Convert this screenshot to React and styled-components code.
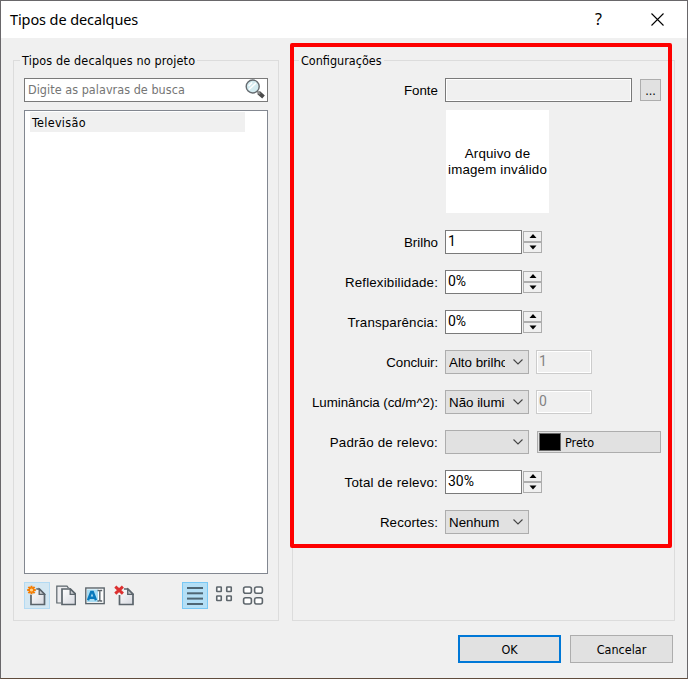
import { useState } from "react";
import styled, { createGlobalStyle, css } from "styled-components";

const GlobalStyle = createGlobalStyle`
  * {
    box-sizing: border-box;
  }
  body {
    margin: 0;
    background: #6b6b6b;
    overflow: hidden;
  }
  button, input {
    font: inherit;
    padding: 0;
    border-radius: 0;
    outline: none;
  }
`;

const tahoma = css`
  font-family: "DejaVu Sans Condensed", "DejaVu Sans", sans-serif;
  font-stretch: condensed;
  font-size: 12.5px;
`;

const Dialog = styled.div`
  width: 688px;
  height: 679px;
  display: flex;
  flex-direction: column;
  background: #f0f0f0;
  border: 1px solid #69676a;
  border-bottom-color: #604c3c;
  color: #000;
  font-family: "Liberation Sans", Arial, sans-serif;
  font-size: 13.33px;
`;

const TitleBar = styled.div`
  height: 37px;
  flex: none;
  display: flex;
  align-items: center;
  padding-left: 9px;
  background: #fff;
`;

const Title = styled.div`
  flex: 1;
  padding-bottom: 1px;
  font-family: "Noto Sans", "Open Sans", sans-serif;
  font-size: 14.5px;
  letter-spacing: -0.1px;
`;

const TitleButton = styled.button`
  width: ${(p) => p.$width}px;
  height: 37px;
  display: flex;
  align-items: center;
  justify-content: center;
  padding-bottom: 1px;
  border: none;
  background: none;
  color: #000;
  font-family: "Noto Sans", sans-serif;
  font-size: 16px;
`;

const Body = styled.div`
  display: flex;
  gap: 13px;
  padding: 14px 12px 0;
`;

const Group = styled.fieldset`
  position: relative;
  width: ${(p) => p.$width}px;
  height: 569px;
  margin: 0;
  padding: ${(p) => p.$padding};
  border: 1px solid #dcdcdc;
  min-width: 0;
`;

const Legend = styled.legend`
  ${tahoma}
  height: 17px;
  line-height: 18px;
  padding: 0 2px;
  margin-left: ${(p) => p.$offset}px;
  white-space: nowrap;
  letter-spacing: ${(p) => p.$spacing || "0"};
`;

const SearchBox = styled.div`
  height: 24px;
  display: flex;
  align-items: center;
  padding: 0 2px 2px 3px;
  background: #fff;
  border: 1px solid #7a7a7a;
`;

const SearchInput = styled.input`
  ${tahoma}
  flex: 1;
  min-width: 0;
  border: none;
  background: none;
  letter-spacing: 0.04px;
  &::placeholder {
    color: #757575;
    opacity: 1;
  }
`;

const List = styled.div`
  height: 464px;
  margin-top: 8px;
  padding: 1px 22px 0 5px;
  background: #fff;
  border: 1px solid #828790;
`;

const ListItem = styled.div`
  ${tahoma}
  height: 20px;
  line-height: 21px;
  padding-left: 2px;
  background: #f0f0f0;
  letter-spacing: 0.3px;
`;

const Toolbar = styled.div`
  display: flex;
  align-items: center;
  gap: 3px;
  margin: 8px 2px 0 0;
`;

const Spacer = styled.div`
  flex: 1;
`;

const ToolButton = styled.button`
  width: 26px;
  height: 27px;
  display: flex;
  align-items: center;
  justify-content: center;
  border: 1px solid ${(p) => p.$border || "transparent"};
  background: ${(p) => p.$fill || "none"};
`;

const Highlight = styled.div`
  position: absolute;
  z-index: 1;
  left: -3px;
  top: -26px;
  width: 382px;
  height: 505px;
  border: 4px solid #fe0000;
  border-radius: 2px;
  pointer-events: none;
`;

const Form = styled.div`
  display: flex;
  flex-direction: column;
  gap: 16px;
`;

const Row = styled.div`
  display: flex;
  align-items: center;
  height: 24px;
`;

const Label = styled.label`
  width: 145px;
  margin-right: 7px;
  text-align: right;
  white-space: nowrap;
  padding-top: 1px;
  letter-spacing: ${(p) => p.$spacing || 0}px;
`;

const SourceField = styled.div`
  width: 187px;
  height: 24px;
  margin-right: 8px;
  border: 1px solid #7a7a7a;
  box-shadow: inset 0 0 0 1px #fff;
`;

const BrowseButton = styled.button`
  ${tahoma}
  width: 21px;
  height: 22px;
  border: 1px solid #adadad;
  background: #e1e1e1;
  color: #000;
`;

const Preview = styled.div`
  width: 103px;
  height: 103px;
  margin: -8px 0 1px 153px;
  display: flex;
  align-items: center;
  justify-content: center;
  background: #fff;
  line-height: 16px;
  text-align: center;
  white-space: pre-line;
  letter-spacing: 0.18px;
`;

const NumberInput = styled.input`
  width: ${(p) => (p.disabled ? 56 : 77)}px;
  height: 24px;
  padding: 0 0 2px 2px;
  font-family: Roboto, Arial, sans-serif;
  font-size: 14px;
  color: ${(p) => (p.disabled ? "#838383" : "#000")};
  background: ${(p) => (p.disabled ? "#f0f0f0" : "#fff")};
  border: 1px solid ${(p) => (p.disabled ? "#cccccc" : "#7a7a7a")};
  box-shadow: inset 0 0 0 1px #fff;
  margin-left: ${(p) => (p.disabled ? 7 : 0)}px;
`;

const Spinner = styled.div`
  display: flex;
  flex-direction: column;
  margin-left: 1px;
`;

const SpinnerButton = styled.button`
  width: 19px;
  height: 11px;
  display: flex;
  align-items: center;
  justify-content: center;
  border: 1px solid #adadad;
  background: #f0f0f0;
`;

const SelectBox = styled.button`
  width: 84px;
  height: 24px;
  display: flex;
  align-items: center;
  padding: 0 4px 0 3px;
  text-align: left;
  border: 1px solid #adadad;
  background: #e1e1e1;
  color: #000;
`;

const SelectText = styled.span`
  width: 56px;
  flex: none;
  margin-right: 8px;
  overflow: hidden;
  white-space: nowrap;
`;

const ColorButton = styled.button`
  ${tahoma}
  width: 124px;
  height: 22px;
  margin-left: 8px;
  display: flex;
  align-items: center;
  gap: 4px;
  padding-left: 1px;
  border: 1px solid #adadad;
  background: #e1e1e1;
  color: #000;
`;

const Swatch = styled.span`
  width: 22px;
  height: 18px;
  border: 1px solid #696969;
  background: #000;
`;

const Footer = styled.div`
  display: flex;
  justify-content: flex-end;
  gap: 9px;
  padding: 14px 14px 0 0;
`;

const FooterButton = styled.button`
  ${tahoma}
  width: 103px;
  height: 28px;
  padding-top: 1px;
  background: #e1e1e1;
  color: #000;
  border: ${(p) => (p.$primary ? "2px solid #0078d7" : "1px solid #adadad")};
`;

const CloseIcon = () => (
  <svg width="13" height="13" viewBox="0 0 13 13">
    <path d="M0.5 0.5l12 12M12.5 0.5l-12 12" stroke="#000" strokeWidth="1.1" />
  </svg>
);

const SearchIcon = () => (
  <svg width="20" height="20" viewBox="0 0 20 20">
    <path d="M13.5 13.5l5 4.5" stroke="#4a4a4a" strokeWidth="4" />
    <path d="M12 12l3 3" stroke="#8d8d8d" strokeWidth="2" />
    <circle cx="7.7" cy="7.5" r="6.5" fill="#d3ebf0" stroke="#656b70" strokeWidth="1.4" />
    <path d="M4 10.5l7-6.5M3.6 7l3.5-3.5" stroke="#fff" strokeWidth="1.5" />
  </svg>
);

const PaperGradient = () => (
  <defs>
    <linearGradient id="paper" x1="0" y1="0" x2="1" y2="1">
      <stop offset="0" stopColor="#fff" />
      <stop offset="1" stopColor="#d6d8df" />
    </linearGradient>
  </defs>
);

const Page = ({ x, y }) => (
  <g transform={`translate(${x} ${y})`}>
    <path d="M1 1h8.5l5 5v10.5H1z" fill="url(#paper)" stroke="#5b646b" strokeWidth="1.7" />
    <path d="M9.2 1v5.3h5.3z" fill="#c9ccd0" stroke="#5b646b" strokeWidth="1.3" />
  </g>
);

const NewIcon = () => (
  <svg width="20" height="22" viewBox="0 0 20 22">
    <PaperGradient />
    <Page x={3} y={3} />
    <circle cx="4.5" cy="5" r="5" fill="#d4e7f2" />
    <path
      d="M4.5 .7v8.6M.2 5h8.6M1.4 1.9l6.2 6.2M7.6 1.9L1.4 8.1"
      stroke="#f57c00"
      strokeWidth="2"
    />
    <circle cx="4.5" cy="5" r="2.2" fill="#ffd18a" stroke="#f57c00" strokeWidth="1.2" />
  </svg>
);

const CopyIcon = () => (
  <svg width="20" height="22" viewBox="0 0 20 22">
    <path d="M5 18H.8V1.2H11l1.5 2" fill="#ececef" stroke="#5b646b" strokeWidth="1.2" />
    <Page x={5} y={3} />
  </svg>
);

const RenameIcon = () => (
  <svg width="20" height="18" viewBox="0 0 20 18">
    <rect x=".8" y="1" width="18.4" height="15.6" fill="#fff" stroke="#5b646b" strokeWidth="1.4" />
    <rect x="2" y="2.5" width="11" height="12.5" fill="#a9dcf2" />
    <path d="M3 13.2L6.2 5h1.6L11 13.2M4.8 10.7h4.6" fill="none" stroke="#0879bd" strokeWidth="2.4" />
    <path
      d="M12.5 3.5h1.5l.8.8.8-.8h1.6M12.5 14h1.5l.8-.8.8.8h1.6M14.8 4v9.5"
      fill="none"
      stroke="#5b646b"
      strokeWidth="1.4"
    />
  </svg>
);

const DeleteIcon = () => (
  <svg width="20" height="22" viewBox="0 0 20 22">
    <Page x={4.5} y={3} />
    <path d="M0 0h10v10H0z" fill="#f0f0f0" />
    <path d="M1.3 1.7l7.6 7M8.9 1.7l-7.6 7" stroke="#dc3030" strokeWidth="3" />
  </svg>
);

const ListViewIcon = () => (
  <svg width="18" height="20" viewBox="0 0 18 20">
    {[2, 7.3, 12.6, 18].map((y) => (
      <path key={y} d={`M1 ${y}h16`} stroke="#4f6674" strokeWidth="2" />
    ))}
  </svg>
);

const TileViewIcon = ({ w, h, stepX, stepY, radius }) => (
  <svg width="22" height="20" viewBox="0 0 22 20">
    {[0, 1, 2, 3].map((i) => (
      <rect
        key={i}
        x={(22 - stepX - w) / 2 + (i % 2) * stepX}
        y={1 + Math.floor(i / 2) * stepY}
        width={w}
        height={h}
        rx={radius}
        fill="#fff"
        stroke="#5e666c"
        strokeWidth="1.6"
      />
    ))}
  </svg>
);

const Arrow = ({ down }) => (
  <svg width="8" height="5" viewBox="0 0 8 5">
    <path d={down ? "M.5 .5h7L4 4.5z" : "M.5 4h7L4 0z"} fill="#000" />
  </svg>
);

const Chevron = () => (
  <svg width="10" height="6" viewBox="0 0 10 6">
    <path d="M.5.5L5 5 9.5.5" fill="none" stroke="#444" strokeWidth="1.1" />
  </svg>
);

const Stepper = ({ value }) => (
  <>
    <NumberInput defaultValue={value} />
    <Spinner>
      <SpinnerButton>
        <Arrow />
      </SpinnerButton>
      <SpinnerButton>
        <Arrow down />
      </SpinnerButton>
    </Spinner>
  </>
);

const Select = ({ value }) => (
  <SelectBox>
    <SelectText>{value}</SelectText>
    <Chevron />
  </SelectBox>
);

const rows = [
  { label: "Brilho", type: "number", value: "1" },
  { label: "Reflexibilidade:", spacing: 0.17, type: "number", value: "0%" },
  { label: "Transparência:", spacing: 0.15, type: "number", value: "0%" },
  { label: "Concluir:", spacing: -0.1, type: "select", value: "Alto brilho", extra: "1" },
  {
    label: "Luminância (cd/m^2):",
    spacing: -0.05,
    type: "select",
    value: "Não iluminado",
    extra: "0",
  },
  { label: "Padrão de relevo:", spacing: 0.18, type: "select", value: "", color: "Preto" },
  { label: "Total de relevo:", spacing: 0.19, type: "number", value: "30%" },
  { label: "Recortes:", spacing: 0.12, type: "select", value: "Nenhum" },
];

const App = () => {
  const [search, setSearch] = useState("");
  return (
    <>
      <GlobalStyle />
      <Dialog>
        <TitleBar>
          <Title>Tipos de decalques</Title>
          <TitleButton $width={57}>?</TitleButton>
          <TitleButton $width={60}>
            <CloseIcon />
          </TitleButton>
        </TitleBar>
        <Body>
          <Group $width={266} $padding="9px 10px 0">
            <Legend $offset={-4} $spacing="0.15px">
              Tipos de decalques no projeto
            </Legend>
            <SearchBox>
              <SearchInput
                placeholder="Digite as palavras de busca"
                value={search}
                onChange={(e) => setSearch(e.target.value)}
              />
              <SearchIcon />
            </SearchBox>
            <List>
              <ListItem>Televisão</ListItem>
            </List>
            <Toolbar>
              <ToolButton $border="#b3daf3" $fill="#d4e7f2">
                <NewIcon />
              </ToolButton>
              <ToolButton>
                <CopyIcon />
              </ToolButton>
              <ToolButton>
                <RenameIcon />
              </ToolButton>
              <ToolButton>
                <DeleteIcon />
              </ToolButton>
              <Spacer />
              <ToolButton $border="#79c8f5" $fill="#b4dff6">
                <ListViewIcon />
              </ToolButton>
              <ToolButton>
                <TileViewIcon w={4.5} h={4.5} stepX={10} stepY={9} radius={0.5} />
              </ToolButton>
              <ToolButton>
                <TileViewIcon w={7.8} h={6.2} stepX={11} stepY={10.8} radius={2} />
              </ToolButton>
            </Toolbar>
          </Group>
          <Group $width={383} $padding="9px 0 0">
            <Legend $offset={6}>Configurações</Legend>
            <Form>
              <Row>
                <Label>Fonte</Label>
                <SourceField />
                <BrowseButton>...</BrowseButton>
              </Row>
              <Preview>{"Arquivo de\nimagem inválido"}</Preview>
              {rows.map((row) => (
                <Row key={row.label}>
                  <Label $spacing={row.spacing}>{row.label}</Label>
                  {row.type === "number" ? (
                    <Stepper value={row.value} />
                  ) : (
                    <Select value={row.value} />
                  )}
                  {row.extra && <NumberInput disabled defaultValue={row.extra} />}
                  {row.color && (
                    <ColorButton>
                      <Swatch />
                      {row.color}
                    </ColorButton>
                  )}
                </Row>
              ))}
            </Form>
            <Highlight />
          </Group>
        </Body>
        <Footer>
          <FooterButton $primary>OK</FooterButton>
          <FooterButton>Cancelar</FooterButton>
        </Footer>
      </Dialog>
    </>
  );
};

export default App;
